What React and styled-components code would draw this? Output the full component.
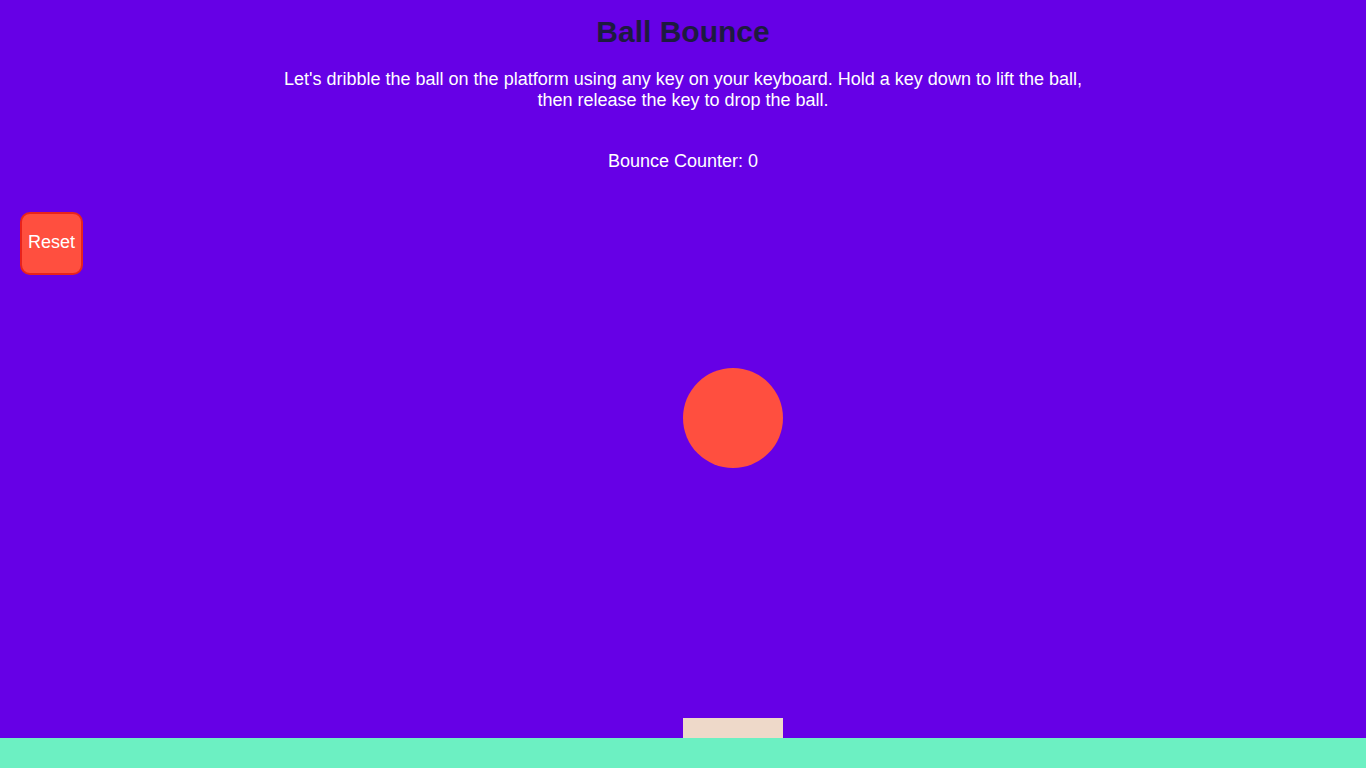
import React, { useState } from 'react'
import styled, { createGlobalStyle } from 'styled-components'

const GlobalStyle = createGlobalStyle`
    html, body {
        margin: 0;
        padding: 0;
        background: #6600e6;
        font-family: "Liberation Sans", Arial, sans-serif;
    }
`

const Page = styled.div`
    height: 100vh;
    display: flex;
    flex-direction: column;
    overflow: hidden;
`

const Header = styled.header`
    display: flex;
    flex-direction: column;
    align-items: center;
    text-align: center;
`

const Title = styled.h1`
    margin: 15px 0 0 0;
    font-size: 30px;
    line-height: 34px;
    font-weight: bold;
    color: #1d1b3f;
`

const Intro = styled.p`
    margin: 20px 0 0 0;
    width: 800px;
    font-size: 18px;
    line-height: 21px;
    color: #fff;
`

const Counter = styled.div`
    margin-top: 39px;
    font-size: 18px;
    line-height: 22px;
    color: #fff;
`

const Stage = styled.main`
    flex: 1;
    position: relative;
    display: flex;
    justify-content: center;
    align-items: flex-end;
`

const ResetButton = styled.button`
    position: absolute;
    top: 40px;
    left: 20px;
    width: 63px;
    height: 63px;
    padding: 0 0 2px 0;
    border: 2px solid #e8231c;
    border-radius: 10px;
    background: #ff4f3f;
    color: #fff;
    font-family: inherit;
    font-size: 18px;
    cursor: pointer;
`

const Ball = styled.div`
    position: absolute;
    left: 50%;
    width: 100px;
    height: 100px;
    border-radius: 50%;
    background: #ff4f3f;
`

const Platform = styled.div`
    width: 100px;
    height: 20px;
    margin-left: 100px;
    background: #eed9c9;
`

const Ground = styled.footer`
    height: 30px;
    background: #6cf0c2;
`

const App = () => {
    const [count, setCount] = useState(0)
    const ballTop = 196

    return (
        <Page>
            <GlobalStyle />
            <Header>
                <Title>Ball Bounce</Title>
                <Intro>
                    Let's dribble the ball on the platform using any key on your keyboard. Hold a key down to lift the ball, then release the key to drop the ball.
                </Intro>
                <Counter>Bounce Counter: {count}</Counter>
            </Header>
            <Stage>
                <ResetButton onClick={() => setCount(0)}>Reset</ResetButton>
                <Ball style={{ top: ballTop }} />
                <Platform />
            </Stage>
            <Ground />
        </Page>
    )
}

export default App
